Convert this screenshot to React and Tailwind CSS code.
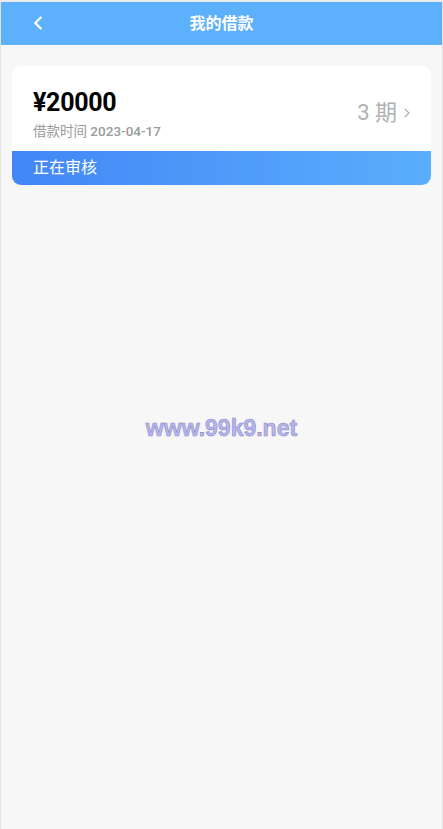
import { ChevronLeft, ChevronRight } from 'lucide-react';

const loan = { amount: '20000', date: '2023-04-17', term: 3, status: '正在审核' };

export default function App() {
  return (
    <div
      className="flex min-h-[829px] flex-col border-l border-t-2 border-r border-[#e2e2e2] border-t-[#ececec] bg-[#f7f7f7]"
      style={{ fontFamily: 'Roboto, "Noto Sans CJK SC", sans-serif' }}
    >
      <header className="relative flex h-[43px] items-center justify-center bg-[#5db0fc]">
        <button className="absolute left-[26px] top-[10px] text-white">
          <ChevronLeft className="h-[22px] w-[22px]" strokeWidth={2.6} />
        </button>
        <h1 className="text-[16px] font-bold text-white">我的借款</h1>
      </header>

      <div className="px-[11px] pt-[21px]">
        <div className="overflow-hidden rounded-[9px] bg-white">
          <div className="flex h-[85px] items-center justify-between pl-[21px] pr-[16px] pt-[9px]">
            <div>
              <div className="text-[25px] font-bold leading-[30px] tracking-[-0.3px] text-black">¥{loan.amount}</div>
              <div className="mt-[5px] text-[13.5px] leading-[16px] text-[#9a9a9a]">
                借款时间 <span className="font-medium">{loan.date}</span>
              </div>
            </div>
            <div className="flex items-center text-[#b0b0b0]">
              <span className="text-[22px] leading-none">{loan.term} 期</span>
              <ChevronRight className="ml-[2px] h-[16px] w-[16px]" strokeWidth={1.6} />
            </div>
          </div>
          <div className="flex h-[34px] items-center bg-gradient-to-r from-[#4386f6] to-[#5aaefc] pl-[21px] text-[16px] text-white">
            {loan.status}
          </div>
        </div>
      </div>

      <div className="flex flex-1 items-start justify-center pt-[226px]">
        <span
          className="text-[23px] font-bold text-[#b6b5ea]"
          style={{ fontFamily: '"Liberation Sans", Arial, sans-serif', WebkitTextStroke: '0.6px #8d8ccf' }}
        >
          www.99k9.net
        </span>
      </div>
    </div>
  );
}
